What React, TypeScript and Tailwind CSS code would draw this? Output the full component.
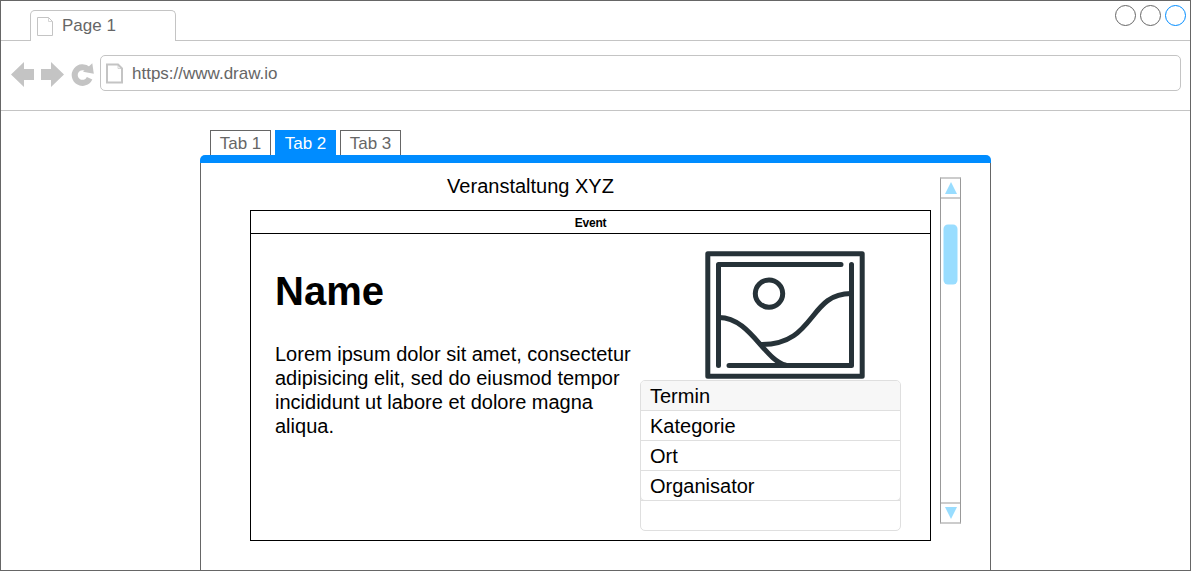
import React from "react";

function PageIcon({ className, stroke }: { className: string; stroke: number }) {
  return (
    <svg className={className} viewBox="0 0 18 21" fill="none" stroke="#c4c4c4" strokeWidth={stroke}>
      <path d="M1.5 1.5 H12.5 L16.5 5.5 V19.5 H1.5 Z" />
      <path d="M12.5 1.5 V5.5 H16.5" strokeWidth={1} strokeOpacity={0.7} />
    </svg>
  );
}

function TitleBar() {
  return (
    <div className="flex h-10 items-end">
      <div className="h-px w-[29px] bg-[#c4c4c4]" />
      <div className="flex h-[31px] w-[146px] items-center rounded-t-[5px] border border-b-0 border-[#c4c4c4] pl-[5px] text-[17px] leading-5 text-[#666]">
        <PageIcon className="mt-px h-[21px] w-[18px]" stroke={1} />
        <span className="ml-2">Page 1</span>
      </div>
      <div className="flex h-10 flex-1 justify-end gap-1 border-b border-[#c4c4c4] pt-1 pr-[4px]">
        <div className="size-[21px] rounded-full border border-[#666]" />
        <div className="size-[21px] rounded-full border border-[#666]" />
        <div className="size-[21px] rounded-full border border-[#008cff]" />
      </div>
    </div>
  );
}

function Toolbar() {
  return (
    <div className="flex h-[70px] border-b border-[#c4c4c4] pt-[14px] pl-[10px]">
      <svg className="mt-[6px] h-[27px] w-[89px] shrink-0" viewBox="11 61 89 27" fill="#c4c4c4">
        <path d="M11 74.5 L24 62 V69 H34 V80 H24 V87 Z" />
        <path d="M64 74.5 L51 62 V69 H41 V80 H51 V87 Z" />
        <path d="M89.6 78.3 A7.8 7.8 0 1 1 88 69.5" fill="none" stroke="#c4c4c4" strokeWidth="6" />
        <path d="M92.3 63.3 L93.8 73.7 L83 71.7 Z" />
      </svg>
      <div className="flex h-9 w-[1081px] items-center rounded-[5px] border border-[#c4c4c4] pl-1 text-[17px] leading-5 text-[#666]">
        <PageIcon className="h-[21px] w-[19px]" stroke={2} />
        <span className="mt-px ml-2 pt-px">https://www.draw.io</span>
      </div>
    </div>
  );
}

function Tabs() {
  return (
    <div className="flex gap-1 pl-[10px] text-center text-[17px] leading-[26px]">
      <div className="h-[25px] w-[61px] border border-b-0 border-[#666] text-[#666]">Tab 1</div>
      <div className="h-[25px] w-[61px] border border-b-0 border-[#008cff] bg-[#008cff] text-white">Tab 2</div>
      <div className="h-[25px] w-[61px] border border-b-0 border-[#666] text-[#666]">Tab 3</div>
    </div>
  );
}

function Picture() {
  return (
    <svg className="ml-[65px] h-[129px] w-[160px]" viewBox="705 251 160 129" fill="none" stroke="#263238" strokeWidth="5" strokeLinecap="round" strokeLinejoin="round">
      <rect x="707.8" y="253.7" width="154.4" height="122.6" />
      <path d="M718.5 365.5 V264.6 H841" />
      <path d="M851.5 264.5 V365.5 H729" />
      <circle cx="769" cy="293.6" r="13.7" />
      <path d="M719 317.5 C750 317.5 764 360 786 365.3" strokeLinecap="butt" />
      <path d="M761 344.6 C816 344.6 808 293.5 851 293.5" strokeLinecap="butt" />
    </svg>
  );
}

function DetailList() {
  return (
    <div className="w-[261px] rounded-[5px] border border-[#dfdfdf] text-[20px] leading-[30px]">
      <div className="h-[30px] rounded-t-[4px] border-b border-[#dfdfdf] bg-[#f7f7f7] pl-[9px]">Termin</div>
      <div className="h-[30px] border-b border-[#dfdfdf] pl-[9px]">Kategorie</div>
      <div className="h-[30px] border-b border-[#dfdfdf] pl-[9px]">Ort</div>
      <div className="-mx-px h-[30px] rounded-b-[5px] border-x border-b border-[#dfdfdf] pl-[9px]">Organisator</div>
      <div className="-mx-px -mt-px h-[30px] border-x border-t border-[#dfdfdf] border-x-transparent" />
    </div>
  );
}

function EventCard() {
  return (
    <div className="mt-[10px] h-[331px] w-[681px] border border-black">
      <div className="h-[23px] border-b border-black text-center text-[12px] leading-[24px] font-bold tracking-[-0.2px]">Event</div>
      <div className="flex">
        <div className="w-[389px] pl-6">
          <h1 className="mt-[34px] text-[40px] leading-[46px] font-bold">Name</h1>
          <p className="mt-[28px] text-[20px] leading-6">
            Lorem ipsum dolor sit amet, consectetur
            <br />
            adipisicing elit, sed do eiusmod tempor
            <br />
            incididunt ut labore et dolore magna
            <br />
            aliqua.
          </p>
        </div>
        <div className="pt-[17px]">
          <Picture />
          <DetailList />
        </div>
      </div>
    </div>
  );
}

function ScrollBar() {
  return (
    <div className="mt-[14px] ml-[9px] flex h-[347px] w-[21px] flex-col items-center border-x border-y-2 border-x-[#999] border-y-[#ccc]">
      <div className="flex h-[20px] w-full justify-center border-b-2 border-[#ccc] pt-[3px]">
        <svg className="h-[12px] w-[12px]" viewBox="0 0 12 12" fill="#99ddff">
          <path d="M6 0 L12 12 H0 Z" />
        </svg>
      </div>
      <svg className="mt-[25px] h-[61px] w-[15px]" viewBox="0 0 15 61" fill="#99ddff">
        <rect x="0.5" y="0.5" width="14" height="60" rx="4.5" />
      </svg>
      <div className="mt-auto flex h-[20px] w-full justify-center border-t-2 border-[#ccc] pt-[3px]">
        <svg className="h-[12px] w-[12px]" viewBox="0 0 12 12" fill="#99ddff">
          <path d="M6 12 L12 0 H0 Z" />
        </svg>
      </div>
    </div>
  );
}

export default function App() {
  return (
    <div className="flex h-[571px] w-[1191px] flex-col overflow-hidden border border-[#666] bg-white font-['Liberation_Sans',Arial,sans-serif] text-black">
      <TitleBar />
      <Toolbar />
      <div className="mt-[19px] ml-[199px] flex w-[791px] flex-1 flex-col">
        <Tabs />
        <div className="h-2 rounded-t-[5px] bg-[#008cff]" />
        <div className="flex flex-1 border-x border-[#666] pl-[49px]">
          <div className="w-[681px]">
            <div className="mt-[11px] h-[26px] w-[561px] text-center text-[20px] leading-[24px]">Veranstaltung XYZ</div>
            <EventCard />
          </div>
          <ScrollBar />
        </div>
      </div>
    </div>
  );
}
